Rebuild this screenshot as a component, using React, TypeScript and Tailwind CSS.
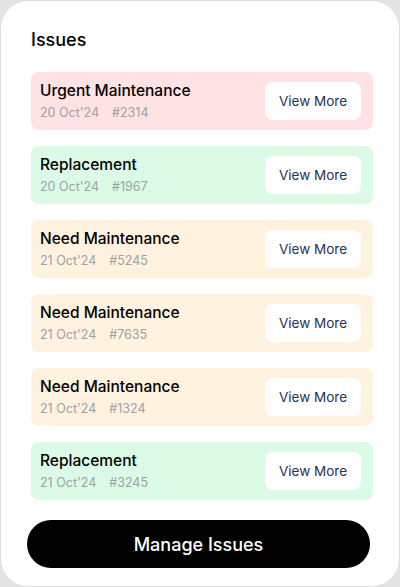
const ISSUES = [
  { title: "Urgent Maintenance", date: "20 Oct'24", id: "#2314", tone: "bg-[#ffe2e4]" },
  { title: "Replacement", date: "20 Oct'24", id: "#1967", tone: "bg-[#dcfbe6]" },
  { title: "Need Maintenance", date: "21 Oct'24", id: "#5245", tone: "bg-[#fff2df]" },
  { title: "Need Maintenance", date: "21 Oct'24", id: "#7635", tone: "bg-[#fff2df]" },
  { title: "Need Maintenance", date: "21 Oct'24", id: "#1324", tone: "bg-[#fff2df]" },
  { title: "Replacement", date: "21 Oct'24", id: "#3245", tone: "bg-[#dcfbe6]" },
];

export default function App() {
  return (
    <div className="h-[587px] w-[400px] bg-[#e4e4e4] font-['Inter',sans-serif]">
      <div className="flex h-full flex-col rounded-[28px] border border-[#dedede] bg-white pl-[30px] pr-[26px] pt-[26px]">
        <h1 className="text-[18px] font-medium leading-[26px] text-black">Issues</h1>

        <div className="mt-[19px] flex flex-col gap-4">
          {ISSUES.map((issue) => (
            <div
              key={issue.id}
              className={`flex h-[58px] items-center justify-between rounded-lg pl-[9px] pr-3 ${issue.tone}`}
            >
              <div>
                <p className="text-[15.5px] font-medium leading-5 text-black">{issue.title}</p>
                <p className="mt-1 flex gap-[13px] text-[12.5px] leading-4 text-[#9da1a6]">
                  <span>{issue.date}</span>
                  <span>{issue.id}</span>
                </p>
              </div>
              <button
                type="button"
                className="h-[38px] w-[96px] rounded-lg bg-white text-[13.5px] text-[#1f3556]"
              >
                View More
              </button>
            </div>
          ))}
        </div>

        <button
          type="button"
          className="-ml-1 mt-5 h-[48px] w-[343px] rounded-full bg-black text-[18px] font-medium text-white"
        >
          Manage Issues
        </button>
      </div>
    </div>
  );
}
